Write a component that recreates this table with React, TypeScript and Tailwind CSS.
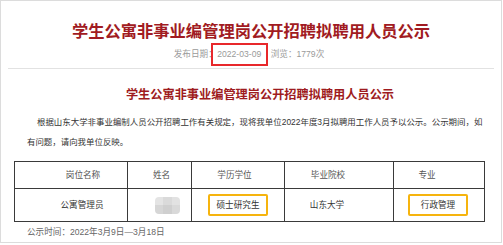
import React from 'react';

const cjk = "font-['Liberation_Sans','Noto_Sans_CJK_SC',sans-serif]";

const headers = [
  { label: '岗位名称', cls: 'pl-[24px]' },
  { label: '姓名', cls: 'pl-[4px]' },
  { label: '学历学位', cls: 'pr-[7px]' },
  { label: '毕业院校', cls: 'pr-[22px]' },
  { label: '专业', cls: 'pr-[24px]' },
];

// mosaic used to mask the applicant's name
const Masked: React.FC = () => (
  <div className="mx-auto ml-[27px] grid h-[17px] w-[25px] grid-cols-3 overflow-hidden rounded-[4px] blur-[0.6px]">
    <div className="bg-[#e4e4e4]" />
    <div className="bg-[#dadada]" />
    <div className="bg-[#e2e2e2]" />
    <div className="bg-[#d6d6d6]" />
    <div className="bg-[#cfcfcf]" />
    <div className="bg-[#d9d9d9]" />
  </div>
);

const Marked: React.FC<{ children: React.ReactNode }> = ({ children }) => (
  <span className="inline-flex h-[22px] w-[60px] items-center justify-center rounded-[2px] border-2 border-[#f6b40e] text-[#333]">
    {children}
  </span>
);

const App: React.FC = () => {
  return (
    <div className={`h-[245px] w-[503px] bg-white ${cjk}`}>
      <div className="flex h-[243px] w-[502px] flex-col border border-[#dcdcdc]">
        {/* Page title */}
        <h1 className="mt-[20px] text-center text-[16.3px] font-bold leading-[20px] text-[#a11b22]">
          学生公寓非事业编管理岗公开招聘拟聘用人员公示
        </h1>

        {/* Meta line */}
        <div className="mt-[2px] flex h-[23px] items-center justify-center pr-[4px] text-[8.6px] text-[#9a9a9a]">
          <span>发布日期：</span>
          <span className="ml-[-6px] flex h-[23px] w-[57px] items-center justify-center border-2 border-[#e8282b]">
            2022-03-09
          </span>
          <span className="ml-[3px]">浏览：1779次</span>
        </div>

        <div className="mx-[7px] mt-[2px] h-px bg-[#e2e2e2]" />

        {/* Article body */}
        <div className="ml-[26px] mr-[8px]">
          <h2 className="mt-[18px] text-center text-[12.2px] font-bold leading-[16px] text-[#9e1b20]">
            学生公寓非事业编管理岗公开招聘拟聘用人员公示
          </h2>
          <p className="mt-[9px] indent-[10px] text-[8.45px] leading-[20px] text-[#333]">
            根据山东大学非事业编制人员公开招聘工作有关规定，现将我单位2022年度3月拟聘用工作人员予以公示。公示期间，如
            <br />
            有问题，请向我单位反映。
          </p>
        </div>

        <table className="ml-[13px] mt-[9px] w-[470px] table-fixed border-collapse text-[8.6px]">
          <colgroup>
            <col className="w-[113px]" />
            <col className="w-[64px]" />
            <col className="w-[93px]" />
            <col className="w-[109px]" />
            <col className="w-[91px]" />
          </colgroup>
          <thead>
            <tr className="h-[27px]">
              {headers.map(h => (
                <th
                  key={h.label}
                  className={`border border-[#3a3a3a] text-center font-normal text-[#555] ${h.cls}`}
                >
                  {h.label}
                </th>
              ))}
            </tr>
          </thead>
          <tbody>
            <tr className="h-[33px] text-[#333]">
              <td className="border border-[#3a3a3a] pl-[22px] text-center">公寓管理员</td>
              <td className="border border-[#3a3a3a]">
                <Masked />
              </td>
              <td className="border border-[#3a3a3a] text-center">
                <Marked>硕士研究生</Marked>
              </td>
              <td className="border border-[#3a3a3a] pr-[24px] text-center">山东大学</td>
              <td className="border border-[#3a3a3a] pr-[2px] text-center">
                <Marked>行政管理</Marked>
              </td>
            </tr>
          </tbody>
        </table>

        <p className="ml-[26px] mt-[3px] text-[8.6px] leading-[14px] text-[#666]">
          公示时间：2022年3月9日—3月18日
        </p>
      </div>
    </div>
  );
};

export default App;
